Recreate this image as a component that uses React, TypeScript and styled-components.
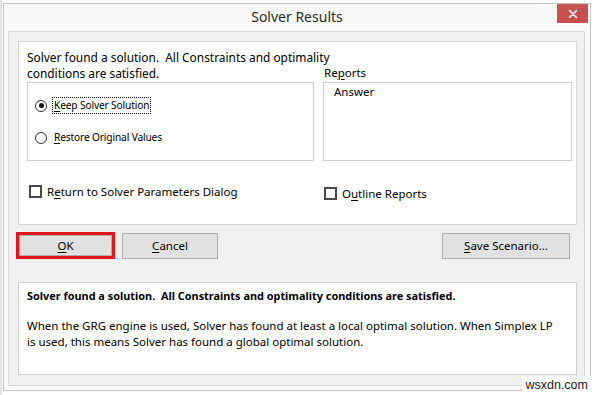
import React from "react";
import styled, { createGlobalStyle } from "styled-components";

const Global = createGlobalStyle`
  html, body { margin: 0; padding: 0; background: #ffffff; }
  body {
    width: 597px; height: 395px; overflow: hidden;
    font-family: "Noto Sans", "Open Sans", sans-serif;
    color: #000;
  }
  * { box-sizing: border-box; }
`;

const Screen = styled.div`
  position: relative;
  width: 597px;
  height: 395px;
  padding: 3px 6px 4px 3px;
  display: flex;
  background: linear-gradient(to right, #e4e4e4 0, #e4e4e4 2px, #ffffff 2px);
`;

const Window = styled.div`
  flex: 1;
  display: flex;
  flex-direction: column;
  background: #f9f9f9;
  border: 1px solid #c6c6c6;
`;

const TitleBar = styled.div`
  height: 27px;
  display: grid;
  grid-template-columns: 1fr auto 1fr;
  align-items: start;
`;

const Title = styled.div`
  grid-column: 2;
  font-size: 14px;
  line-height: 26px;
  color: #2b2b2b;
`;

const Close = styled.div`
  grid-column: 3;
  justify-self: end;
  margin-right: 2px;
  width: 31px;
  height: 19px;
  background: #c75050;
  display: flex;
  align-items: center;
  justify-content: center;
`;

const ClientWrap = styled.div`
  flex: 1;
  display: flex;
  padding: 0 5px 4px 4px;
`;

const Client = styled.div`
  flex: 1;
  display: flex;
  flex-direction: column;
  background: #f0f0f0;
  border: 1px solid #dadada;
  padding: 9px 7px 10px 9px;
  font-size: 11.5px;
`;

const TopPanel = styled.div`
  height: 184px;
  background: #ffffff;
  border: 1px solid #d6d6d6;
  padding: 7px 4px 0 8px;
  display: grid;
  grid-template-columns: 287px 249px;
  grid-template-rows: 16px 17px 79px auto;
  column-gap: 9px;
`;

const Message = styled.div`
  grid-column: 1 / 3;
  grid-row: 1 / 3;
  font-size: 11.9px;
  line-height: 16px;
  white-space: nowrap;
  position: relative;
  z-index: 1;
`;

const ReportsLabel = styled.div`
  grid-column: 2;
  grid-row: 2;
  line-height: 16px;
  padding-left: 1px;
`;

const GroupBox = styled.div`
  grid-column: 1;
  grid-row: 3;
  border: 1px solid #cfcfcf;
  background: #fff;
  padding: 14px 0 0 7px;
  display: flex;
  flex-direction: column;
  gap: 15px;
`;

const ListBox = styled.div`
  grid-column: 2;
  grid-row: 3;
  border: 1px solid #cfcfcf;
  background: #fff;
  padding: 1px 0 0 10px;
  line-height: 16px;
`;

const RadioRow = styled.div`
  display: flex;
  align-items: center;
  height: 17px;
  gap: 5px;
`;

const RadioCircle = styled.span<{ $on?: boolean }>`
  width: 12px;
  height: 12px;
  border-radius: 50%;
  border: 1px solid #333;
  background: #fff;
  display: flex;
  align-items: center;
  justify-content: center;
  &::after {
    content: "";
    width: 5px;
    height: 5px;
    border-radius: 50%;
    background: ${(p) => (p.$on ? "#111" : "transparent")};
  }
`;

const RadioLabel = styled.span<{ $focus?: boolean }>`
  font-size: 10.2px;
  letter-spacing: -0.15px;
  line-height: 15px;
  padding: 0 1px;
  border: 1px dotted ${(p) => (p.$focus ? "#000" : "transparent")};
`;

const CheckCell = styled.div<{ $dy: number; $dx: number; $col: number }>`
  grid-row: 4;
  grid-column: ${(p) => p.$col};
  margin-top: ${(p) => p.$dy}px;
  margin-left: ${(p) => p.$dx}px;
  display: flex;
  align-items: center;
  gap: 5px;
  height: 16px;
  align-self: start;
`;

const CheckBox = styled.span`
  width: 13px;
  height: 13px;
  border: 2px solid #4a4a4a;
  background: #fff;
`;

const ButtonRow = styled.div`
  margin-top: 8px;
  height: 26px;
  display: flex;
  align-items: stretch;
`;

const RedFrame = styled.div`
  margin-left: -2px;
  margin-top: -1px;
  width: 99px;
  height: 27px;
  border: 3px solid #e3141c;
  display: flex;
`;

const Button = styled.div<{ $w?: number; $inner?: boolean }>`
  width: ${(p) => (p.$w ? `${p.$w}px` : "auto")};
  flex: ${(p) => (p.$inner ? 1 : "none")};
  background: #e1e1e1;
  border: 1px solid #adadad;
  display: flex;
  align-items: center;
  justify-content: center;
  line-height: 16px;
`;

const Spacer = styled.div<{ $w?: number }>`
  width: ${(p) => (p.$w ? `${p.$w}px` : "auto")};
  flex: ${(p) => (p.$w ? "none" : 1)};
`;

const BottomPanel = styled.div`
  margin-top: 23px;
  height: 93px;
  background: #fff;
  border: 1px solid #d0d0d0;
  padding: 5px 8px 0 8px;
  line-height: 16px;
  white-space: nowrap;
`;

const Bold = styled.div`
  font-weight: 700;
  font-size: 10.9px;
`;

const Para = styled.div`
  margin-top: 14px;
`;

const Watermark = styled.div`
  position: absolute;
  right: 6px;
  bottom: 0;
  height: 19px;
  padding: 0 3px;
  background: #fff;
  font-family: "Liberation Sans", Arial, sans-serif;
  font-size: 12.5px;
  line-height: 19px;
  color: #222;
`;

const U = styled.u`
  text-decoration-thickness: 1px;
  text-underline-offset: 2px;
`;

export default function App() {
  return (
    <>
      <Global />
      <Screen>
        <Window>
          <TitleBar>
            <Title>Solver Results</Title>
            <Close>
              <svg width="10" height="10" viewBox="0 0 10 10">
                <path d="M1.5 1.5 L8.5 8.5 M8.5 1.5 L1.5 8.5" stroke="#fff" strokeWidth="1.6" strokeLinecap="round" />
              </svg>
            </Close>
          </TitleBar>
          <ClientWrap>
            <Client>
              <TopPanel>
                <Message>
                  Solver found a solution.&nbsp; All Constraints and optimality
                  <br />
                  conditions are satisfied.
                </Message>
                <ReportsLabel>
                  Re<U>p</U>orts
                </ReportsLabel>
                <GroupBox>
                  <RadioRow>
                    <RadioCircle $on />
                    <RadioLabel $focus>
                      <U>K</U>eep Solver Solution
                    </RadioLabel>
                  </RadioRow>
                  <RadioRow>
                    <RadioCircle />
                    <RadioLabel>
                      <U>R</U>estore Original Values
                    </RadioLabel>
                  </RadioRow>
                </GroupBox>
                <ListBox>Answer</ListBox>
                <CheckCell $dy={22} $dx={2} $col={1}>
                  <CheckBox />
                  <span>
                    R<U>e</U>turn to Solver Parameters Dialog
                  </span>
                </CheckCell>
                <CheckCell $dy={24} $dx={1} $col={2}>
                  <CheckBox />
                  <span>
                    O<U>u</U>tline Reports
                  </span>
                </CheckCell>
              </TopPanel>
              <ButtonRow>
                <RedFrame>
                  <Button $inner>
                    <span>
                      <U>O</U>K
                    </span>
                  </Button>
                </RedFrame>
                <Spacer $w={7} />
                <Button $w={96}>
                  <span>
                    <U>C</U>ancel
                  </span>
                </Button>
                <Spacer />
                <Button $w={128}>
                  <span>
                    <U>S</U>ave Scenario...
                  </span>
                </Button>
                <Spacer $w={7} />
              </ButtonRow>
              <BottomPanel>
                <Bold>Solver found a solution.&nbsp; All Constraints and optimality conditions are satisfied.</Bold>
                <Para>
                  When the GRG engine is used, Solver has found at least a local optimal solution. When Simplex LP
                  <br />
                  is used, this means Solver has found a global optimal solution.
                </Para>
              </BottomPanel>
            </Client>
          </ClientWrap>
        </Window>
        <Watermark>wsxdn.com</Watermark>
      </Screen>
    </>
  );
}
